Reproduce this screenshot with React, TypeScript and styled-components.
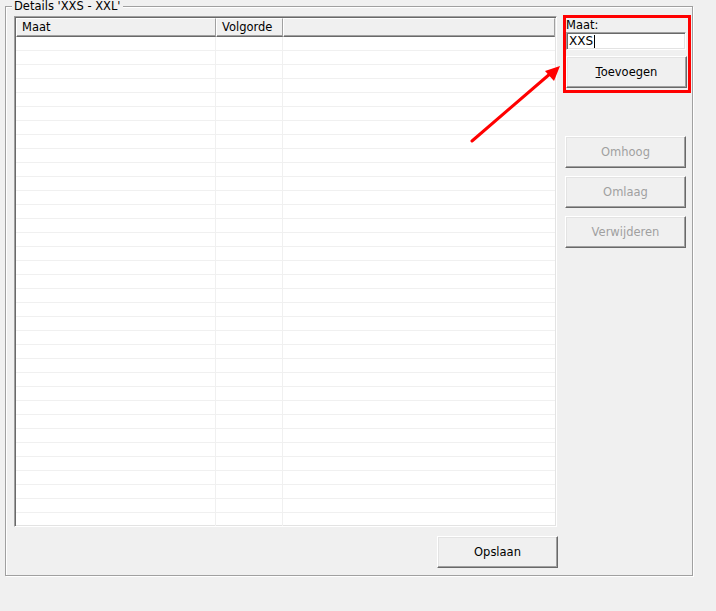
import React from "react";
import styled, { createGlobalStyle } from "styled-components";

const GlobalStyle = createGlobalStyle`
  html, body {
    margin: 0;
    padding: 0;
    background: #f0f0f0;
  }
  body {
    font-family: "DejaVu Sans", "Liberation Sans", sans-serif;
    font-size: 11.5px;
    color: #000;
  }
`;

const Page = styled.div`
  position: relative;
  width: 716px;
  height: 611px;
  background: #f0f0f0;
  overflow: hidden;
`;

const GroupBox = styled.fieldset`
  box-sizing: border-box;
  width: 688px;
  height: 576px;
  margin: 0 0 0 5px;
  padding: 3px 1px 7px 8px;
  border: 1px solid #a0a0a0;
  box-shadow: inset 1px 1px 0 #fff, 1px 1px 0 #fff;
  display: grid;
  grid-template-columns: 543px 128px;
  grid-template-rows: 511px 32px;
  column-gap: 6px;
  row-gap: 9px;
`;

const Legend = styled.legend`
  margin-left: -2px;
  padding: 0 2px;
  height: 13px;
  line-height: 13px;
  background: #f0f0f0;
  font-size: 11.5px;
`;

// ---- list view ----

const ListView = styled.div`
  box-sizing: border-box;
  background: #fff;
  border: 1px solid;
  border-color: #a0a0a0 #fff #fff #a0a0a0;
  box-shadow: inset 1px 1px 0 #696969, inset -1px -1px 0 #e3e3e3;
  padding: 1px;
  overflow: hidden;
  display: flex;
  flex-direction: column;
`;

const HeaderRow = styled.div`
  display: grid;
  grid-template-columns: 200px 67px 1fr;
  height: 19px;
  flex-shrink: 0;
`;

const HeaderCell = styled.div`
  box-sizing: border-box;
  background: #f0f0f0;
  border-top: 1px solid #fff;
  border-left: 1px solid #fff;
  border-right: 1px solid #a0a0a0;
  border-bottom: 1px solid #696969;
  box-shadow: inset 0 -1px 0 #a0a0a0;
  padding: 1px 0 0 5px;
  line-height: 15px;
  white-space: nowrap;
`;

const Row = styled.div`
  display: grid;
  grid-template-columns: 200px 67px 1fr;
  height: 14px;
  flex-shrink: 0;
`;

const Cell = styled.div<{ $last?: boolean }>`
  box-sizing: border-box;
  border-bottom: 1px solid #f0f0f0;
  border-right: ${(p) => (p.$last ? "none" : "1px solid #f0f0f0")};
`;

// ---- right side ----

const SidePanel = styled.div`
  display: flex;
  flex-direction: column;
`;

const Highlight = styled.div`
  box-sizing: border-box;
  width: 128px;
  margin-top: -1px;
  border: 3px solid #ff0000;
  padding: 0 0 2px 0;
  display: flex;
  flex-direction: column;
`;

const FieldLabel = styled.div`
  line-height: 13px;
  height: 13px;
  margin-top: 1px;
`;

const TextBox = styled.div`
  box-sizing: border-box;
  width: 120px;
  height: 18px;
  background: #fff;
  border: 1px solid;
  border-color: #a0a0a0 #fff #fff #a0a0a0;
  box-shadow: inset 1px 1px 0 #696969, inset -1px -1px 0 #e3e3e3;
  padding: 0 2px;
  font-size: 12px;
  line-height: 16px;
  display: flex;
  align-items: center;
`;

const Caret = styled.span`
  display: inline-block;
  width: 1px;
  height: 13px;
  background: #000;
  margin-left: 1px;
`;

const Button = styled.button`
  box-sizing: border-box;
  width: 121px;
  height: 32px;
  margin: 0;
  padding: 0;
  background: #f0f0f0;
  border: 1px solid;
  border-color: #fff #696969 #696969 #fff;
  box-shadow: inset -1px -1px 0 #a0a0a0, inset 1px 1px 0 #e3e3e3;
  font-family: "DejaVu Sans", "Liberation Sans", sans-serif;
  font-size: 11.5px;
  color: #000;
  border-radius: 0;

  &:disabled {
    color: #a0a0a0;
  }
`;

const AddButton = styled(Button)`
  margin-top: 6px;
`;

const ActionGroup = styled.div`
  display: flex;
  flex-direction: column;
  gap: 8px;
  margin-top: 43px;
  padding-left: 2px;
`;

const Footer = styled.div`
  display: flex;
  justify-content: flex-end;
  margin-right: -1px;
`;

const Arrow = styled.svg`
  position: absolute;
  left: 0;
  top: 0;
  pointer-events: none;
`;

const columns = ["Maat", "Volgorde", ""];

export default function App() {
  const rows = Array.from({ length: 36 });

  return (
    <Page>
      <GlobalStyle />
      <GroupBox>
        <Legend>Details 'XXS - XXL'</Legend>

        <ListView>
          <HeaderRow>
            {columns.map((c, i) => (
              <HeaderCell key={i}>{c}</HeaderCell>
            ))}
          </HeaderRow>
          {rows.map((_, i) => (
            <Row key={i}>
              <Cell />
              <Cell />
              <Cell $last />
            </Row>
          ))}
        </ListView>

        <SidePanel>
          <Highlight>
            <FieldLabel>Maat:</FieldLabel>
            <TextBox>
              XXS
              <Caret />
            </TextBox>
            <AddButton type="button">
              <u>T</u>oevoegen
            </AddButton>
          </Highlight>
          <ActionGroup>
            <Button type="button" disabled>
              Omhoog
            </Button>
            <Button type="button" disabled>
              Omlaag
            </Button>
            <Button type="button" disabled>
              Verwijderen
            </Button>
          </ActionGroup>
        </SidePanel>

        <Footer>
          <Button type="button">Opslaan</Button>
        </Footer>
      </GroupBox>

      <Arrow width="716" height="611" viewBox="0 0 716 611">
        <line x1="472" y1="141" x2="551" y2="73" stroke="#ff0000" strokeWidth="3" strokeLinecap="round" />
        <polygon points="560,66 545,71 554,81" fill="#ff0000" />
      </Arrow>
    </Page>
  );
}
